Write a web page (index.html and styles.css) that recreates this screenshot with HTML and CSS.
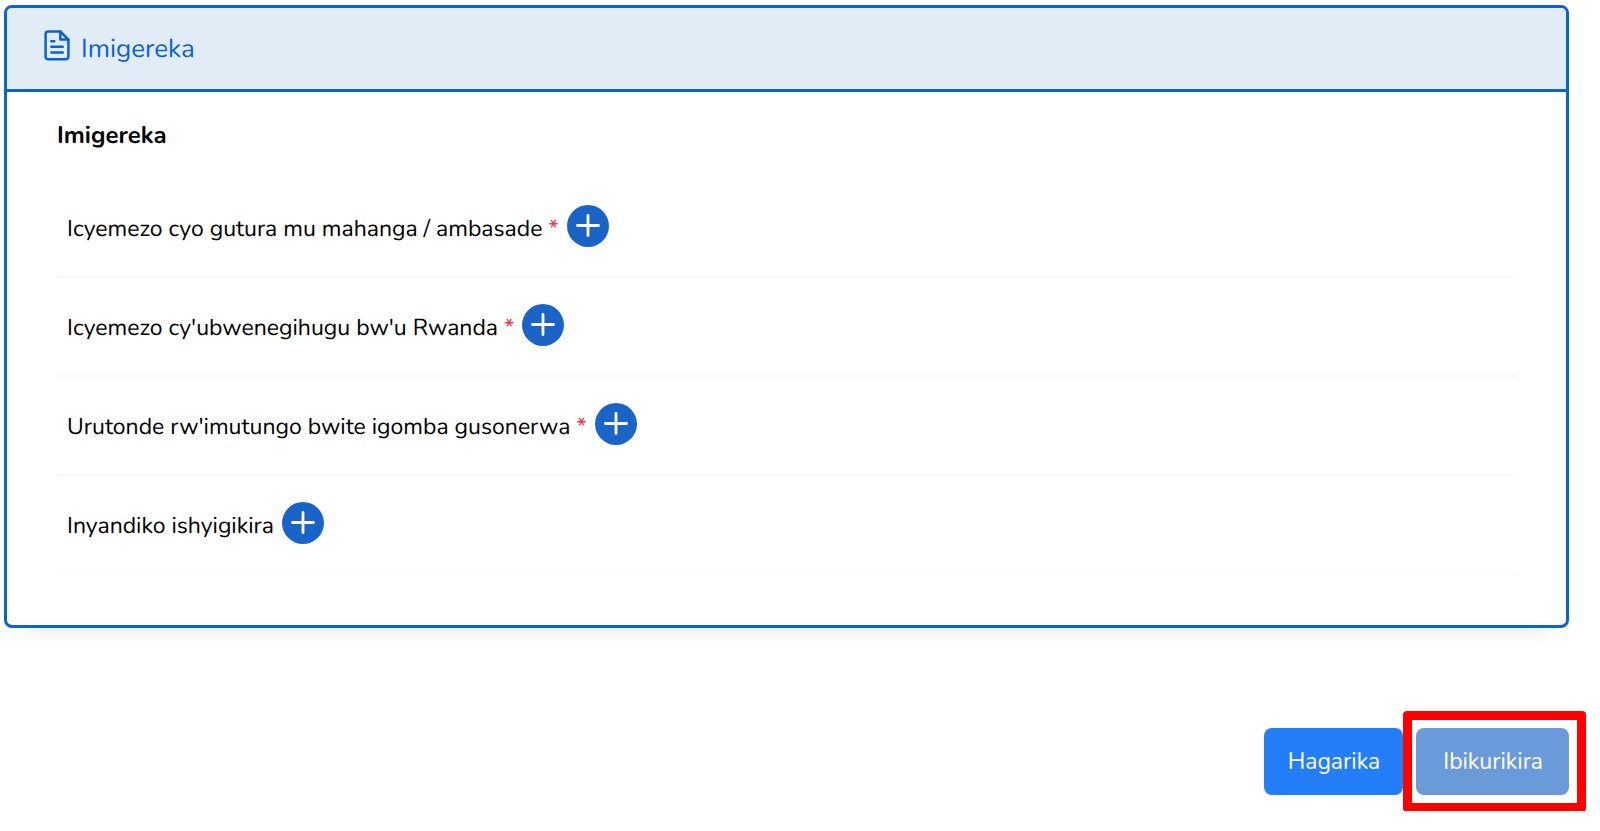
FILE: index.html
```
<!DOCTYPE html>
<html lang="rw">
<head>
    <meta charset="UTF-8">
    <meta name="viewport" content="width=device-width, initial-scale=1">
    <title>Imigereka</title>
    <link rel="stylesheet" href="styles.css">
</head>
<body>
    <section class="card">
        <header class="card-header">
            <svg class="file-icon" viewBox="0 0 26 31" fill="none" stroke="currentColor" stroke-width="2.5" stroke-linecap="round" stroke-linejoin="round" aria-hidden="true">
                <path d="M16.3 1.5H4.2a2.6 2.6 0 0 0-2.6 2.6v22.6a2.6 2.6 0 0 0 2.6 2.6h17.6a2.6 2.6 0 0 0 2.6-2.6V9.6z"/>
                <path d="M16.3 1.5V9.6H24.4"/>
                <path d="M7.3 11.3H10.3M7.3 16.8H18.7M7.3 22.5H18.7"/>
            </svg>
            <h1>Imigereka</h1>
        </header>

        <div class="card-body">
            <h2>Imigereka</h2>
            <ul class="attachments">
                <li>
                    <span class="label" id="doc-1">Icyemezo cyo gutura mu mahanga / ambasade <span class="required">*</span></span>
                    <button type="button" class="add-btn" aria-labelledby="doc-1">
                        <svg viewBox="0 0 24 24" aria-hidden="true"><path d="M12 1.5v20M1.5 11.5h21"/></svg>
                    </button>
                </li>
                <li>
                    <span class="label" id="doc-2">Icyemezo cy'ubwenegihugu bw'u Rwanda <span class="required">*</span></span>
                    <button type="button" class="add-btn" aria-labelledby="doc-2">
                        <svg viewBox="0 0 24 24" aria-hidden="true"><path d="M12 1.5v20M1.5 11.5h21"/></svg>
                    </button>
                </li>
                <li>
                    <span class="label" id="doc-3">Urutonde rw'imutungo bwite igomba gusonerwa <span class="required">*</span></span>
                    <button type="button" class="add-btn" aria-labelledby="doc-3">
                        <svg viewBox="0 0 24 24" aria-hidden="true"><path d="M12 1.5v20M1.5 11.5h21"/></svg>
                    </button>
                </li>
                <li>
                    <span class="label" id="doc-4">Inyandiko ishyigikira</span>
                    <button type="button" class="add-btn" aria-labelledby="doc-4">
                        <svg viewBox="0 0 24 24" aria-hidden="true"><path d="M12 1.5v20M1.5 11.5h21"/></svg>
                    </button>
                </li>
            </ul>
        </div>
    </section>

    <div class="actions">
        <button type="button" class="btn btn-cancel">Hagarika</button>
        <div class="highlight">
            <button type="button" class="btn btn-next">Ibikurikira</button>
        </div>
    </div>
</body>
</html>
```
FILE: styles.css
```
:root {
    --primary-color: #0b63ce;
    --button-color: #1a64c8;
    --cancel-color: #247ef7;
    --next-color: #6b9adb;
    --header-bg: #e2ecf6;
    --line-color: #fafafa;
    --required-color: #e8384f;
}

* {
    box-sizing: border-box;
    margin: 0;
    padding: 0;
}

body {
    font-family: Nunito, Lato, sans-serif;
    font-size: 23px;
    line-height: 32px;
    padding: 5px 31px 16px 4px;
    background-color: #fff;
    color: #000;
    text-rendering: geometricPrecision;
}

.card {
    border: 3px solid var(--primary-color);
    border-radius: 8px;
    box-shadow: 0 20px 20px -20px rgba(0, 0, 0, 0.12);
}

.card-header {
    display: flex;
    align-items: center;
    gap: 11px;
    height: 84px;
    padding: 2px 37px 0;
    background-color: var(--header-bg);
    border-bottom: 3px solid var(--primary-color);
    border-radius: 5px 5px 0 0;
    color: var(--primary-color);
}

.card-header h1 {
    font-size: 26px;
    font-weight: 400;
}

.file-icon {
    width: 26px;
    height: 31px;
    margin-bottom: 8px;
}

.card-body {
    padding: 28px 48px 50px 50px;
}

.card-body h2 {
    font-size: 24px;
    font-weight: 700;
    margin-bottom: 27px;
}

.attachments {
    list-style: none;
}

.attachments li {
    display: flex;
    align-items: center;
    gap: 8px;
    height: 99px;
    padding: 0 10px 4px;
    border-bottom: 2px solid var(--line-color);
}

.label {
    padding-top: 8px;
}

.required {
    color: var(--required-color);
}

.add-btn {
    display: flex;
    align-items: center;
    justify-content: center;
    width: 42px;
    height: 42px;
    border: none;
    border-radius: 50%;
    background-color: var(--button-color);
    cursor: pointer;
}

.add-btn svg {
    width: 24px;
    height: 24px;
    fill: none;
    stroke: #fff;
    stroke-width: 2.8;
    stroke-linecap: round;
}

.actions {
    display: flex;
    justify-content: flex-end;
    gap: 13px;
    margin-top: 100px;
}

.btn {
    height: 67px;
    padding: 0 23px 0 24px;
    border: none;
    border-radius: 8px;
    font: inherit;
    color: #fff;
    cursor: pointer;
}

.btn-cancel {
    background-color: var(--cancel-color);
}

.btn-next {
    padding: 0 26px 0 27px;
    background-color: var(--next-color);
}

.highlight {
    position: relative;
}

/* Red frame around the next step */
.highlight::after {
    content: "";
    position: absolute;
    inset: -17px -17px -17px -13px;
    border: 9px solid #f00;
    border-radius: 4px;
    pointer-events: none;
}
```
